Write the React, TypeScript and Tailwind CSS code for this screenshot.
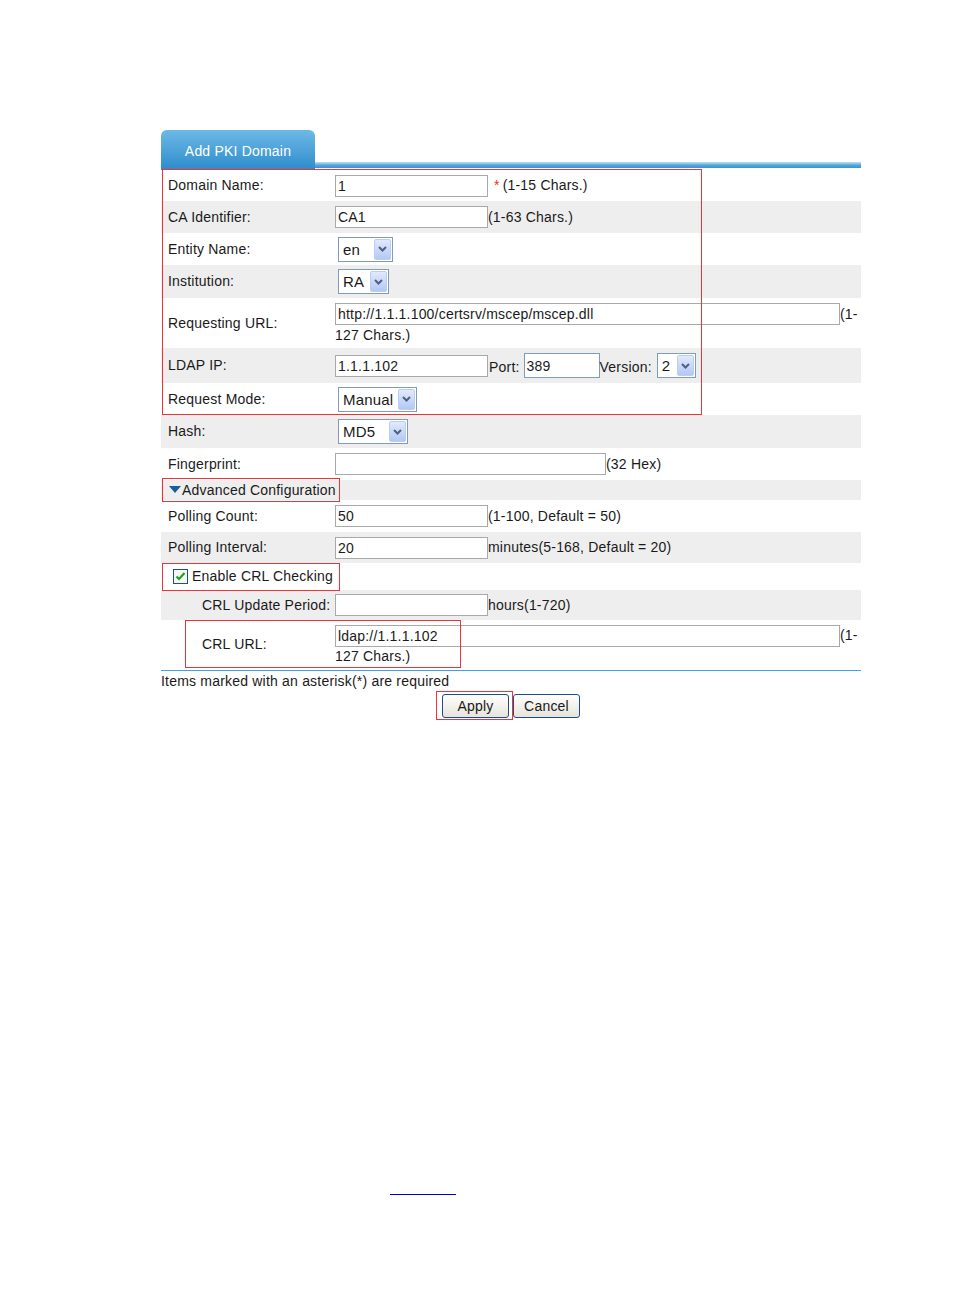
import React from "react";

const font = { fontFamily: '"Liberation Sans", Arial, sans-serif' };

function Row({
  gray,
  h,
  label,
  indent,
  children,
}: {
  gray?: boolean;
  h: string;
  label?: React.ReactNode;
  indent?: boolean;
  children?: React.ReactNode;
}) {
  return (
    <div className={`flex items-center ${h} ${gray ? "bg-[#eeeeee]" : "bg-white"}`}>
      <div className={`w-[174px] shrink-0 ${indent ? "pl-[41px]" : "pl-[7px]"}`}>{label}</div>
      <div className="flex-1 min-w-0">{children}</div>
    </div>
  );
}

function Input({ w, value, blue }: { w: string; value?: string; blue?: boolean }) {
  return (
    <div
      className={`${w} ${blue ? "h-[25px] border-[#7f9db9]" : "h-[22px] border-[#a9a9a9]"} border bg-white flex items-center pl-[2px] text-[14px] leading-none shrink-0`}
    >
      {value}
    </div>
  );
}

function Select({ w, value }: { w: string; value: string }) {
  return (
    <div className={`${w} ml-[3px] h-[25px] border border-[#7f9db9] bg-white flex items-center justify-between pl-[4px] pr-[1px] shrink-0`}>
      <span className="text-[15px] leading-none">{value}</span>
      <span className="w-[17px] h-[21px] rounded-[2px] border border-[#bccdf3] bg-gradient-to-b from-[#e1eafe] to-[#b4c8f4] flex items-center justify-center">
        <svg width="9" height="6" viewBox="0 0 9 6">
          <path d="M1 1 L4.5 4.5 L8 1" stroke="#4d6185" strokeWidth="2" fill="none" />
        </svg>
      </span>
    </div>
  );
}

function Btn({ label, w }: { label: string; w: string }) {
  return (
    <button
      className={`${w} h-[24px] rounded-[3px] border border-[#1c4f86] bg-gradient-to-b from-white to-[#e6e4da] text-[14px] leading-none text-[#1a1a1a] tracking-[0.2px]`}
    >
      {label}
    </button>
  );
}

export default function App() {
  return (
    <div className="min-h-[1294px] bg-white text-[14px] text-[#1a1a1a] tracking-[0.2px]" style={font}>
      <div className="ml-[161px] w-[700px] pt-[130px]">
        {/* tab header */}
        <div className="flex items-end">
          <div className="w-[154px] h-[40px] rounded-t-[6px] bg-gradient-to-b from-[#6cb9e6] to-[#2b8ccb] flex items-end justify-center pb-[8px] text-white text-[14px]">
            Add PKI Domain
          </div>
          <div className="flex-1 h-[6px] mb-[2px] bg-gradient-to-b from-[#c2e2f4] via-[#57a9db] to-[#3993d0]" />
        </div>

        {/* required block */}
        <div className="relative">
          <Row h="h-[31px]" label="Domain Name:">
            <div className="flex items-center">
              <Input w="w-[153px]" value="1" />
              <span className="text-[#ee2d2d] ml-[6px] mr-[3px]">*</span>
              <span>(1-15 Chars.)</span>
            </div>
          </Row>
          <Row gray h="h-[32px]" label="CA Identifier:">
            <div className="flex items-center">
              <Input w="w-[153px]" value="CA1" />
              <span>(1-63 Chars.)</span>
            </div>
          </Row>
          <Row h="h-[32px]" label="Entity Name:">
            <Select w="w-[55px]" value="en" />
          </Row>
          <Row gray h="h-[33px]" label="Institution:">
            <Select w="w-[51px]" value="RA" />
          </Row>
          <Row h="h-[50px]" label="Requesting URL:">
            <div className="flex items-center">
              <Input w="w-[505px]" value="http://1.1.1.100/certsrv/mscep/mscep.dll" />
              <span>(1-</span>
            </div>
            <div className="mt-[2px] leading-[16px]">127 Chars.)</div>
          </Row>
          <Row gray h="h-[35px]" label="LDAP IP:">
            <div className="flex items-center">
              <Input w="w-[153px]" value="1.1.1.102" />
              <span className="ml-[1px] mr-[4px] mt-[4px]">Port:</span>
              <Input w="w-[76px]" value="389" blue />
              <span className="mt-[4px]">Version:</span>
              <span className="ml-[2px]">
                <Select w="w-[39px]" value="2" />
              </span>
            </div>
          </Row>
          <Row h="h-[32px]" label="Request Mode:">
            <Select w="w-[79px]" value="Manual" />
          </Row>
          <div className="absolute left-[1px] top-[-1px] bottom-0 w-[540px] border border-[#ee3338] pointer-events-none" />
        </div>

        <Row gray h="h-[33px]" label="Hash:">
          <Select w="w-[70px]" value="MD5" />
        </Row>
        <Row h="h-[32px]" label="Fingerprint:">
          <div className="flex items-center">
            <Input w="w-[271px]" />
            <span>(32 Hex)</span>
          </div>
        </Row>
        <div className="h-[20px] bg-[#eeeeee] flex items-center">
          <div className="ml-[1px] w-[178px] h-[24px] border border-[#ee3338] flex items-center pl-[6px]">
            <svg width="12" height="8" viewBox="0 0 12 8" className="mr-[1px]">
              <path d="M0 0 H12 L6 7 Z" fill="#1b5c9e" />
            </svg>
            <span>Advanced Configuration</span>
          </div>
        </div>
        <Row h="h-[32px]" label="Polling Count:">
          <div className="flex items-center">
            <Input w="w-[153px]" value="50" />
            <span>(1-100, Default = 50)</span>
          </div>
        </Row>
        <Row gray h="h-[31px]" label="Polling Interval:">
          <div className="flex items-center">
            <Input w="w-[153px]" value="20" />
            <span>minutes(5-168, Default = 20)</span>
          </div>
        </Row>
        <div className="h-[27px] bg-white flex items-center">
          <div className="ml-[1px] w-[178px] h-[28px] border border-[#ee3338] flex items-center pl-[10px]">
            <svg width="15" height="15" viewBox="0 0 15 15" className="mr-[4px]">
              <rect x="0.5" y="0.5" width="14" height="14" fill="#f6f6f2" stroke="#1c5180" />
              <path d="M3.5 7.5 L6 10 L11.5 4" stroke="#21a121" strokeWidth="2.2" fill="none" />
            </svg>
            <span>Enable CRL Checking</span>
          </div>
        </div>
        <Row gray indent h="h-[30px]" label="CRL Update Period:">
          <div className="flex items-center">
            <Input w="w-[153px]" />
            <span>hours(1-720)</span>
          </div>
        </Row>
        <div className="relative">
          <Row h="h-[48px]" indent label="CRL URL:">
            <div className="flex items-center">
              <Input w="w-[505px]" value="ldap://1.1.1.102" />
              <span>(1-</span>
            </div>
            <div className="mt-[1px] leading-[16px]">127 Chars.)</div>
          </Row>
          <div className="absolute left-[24px] top-0 bottom-0 w-[276px] border border-[#ee3338] pointer-events-none" />
        </div>

        <div className="mt-[2px] h-[1px] bg-[#3aa4ec]" />
        <div className="mt-[1px] leading-[18px]">Items marked with an asterisk(*) are required</div>

        <div className="flex items-start pl-[275px] mt-[1px]">
          <span className="border border-[#ee3338] pl-[5px] pr-[3px] pt-[2px] h-[29px]">
            <Btn label="Apply" w="w-[67px]" />
          </span>
          <span className="pt-[3px]">
            <Btn label="Cancel" w="w-[67px]" />
          </span>
        </div>

        <div className="mt-[474px] ml-[229px] w-[66px] h-[1px] bg-[#0000cc]" />
      </div>
    </div>
  );
}
